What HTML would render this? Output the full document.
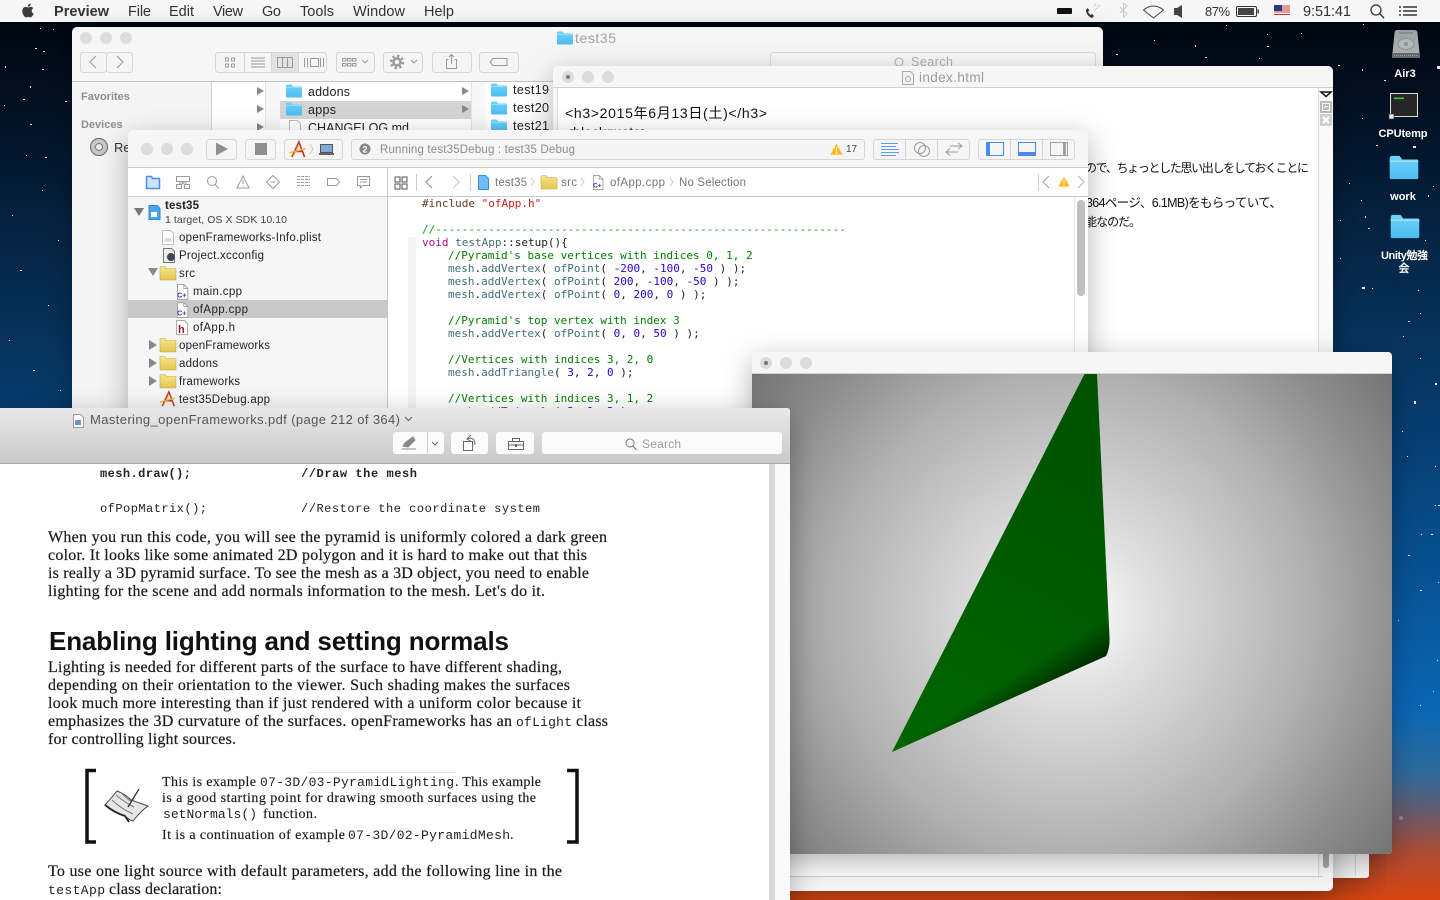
<!DOCTYPE html>
<html><head><meta charset="utf-8"><title>Preview</title>
<style>
html,body{margin:0;padding:0;background:#000;width:1440px;height:900px;overflow:hidden}
svg{display:block}
text{font-family:"Liberation Sans","Noto Sans CJK JP",sans-serif;white-space:pre}
.m{font-size:14.5px;fill:#333}
.code{font-family:"DejaVu Sans Mono",monospace;font-size:11px}
.c{fill:#007f00}.t{fill:#3f6e74}.n{fill:#2a00d0}.k{fill:#222}
.tb{font-size:11.5px;fill:#222}
.s{font-family:"Liberation Serif",serif;font-size:16px;fill:#1a1a1a;stroke:#1a1a1a;stroke-width:.2}
.n2{font-family:"Liberation Serif",serif;font-size:14px;fill:#1a1a1a;stroke:#1a1a1a;stroke-width:.15}
.pm{font-family:"Liberation Mono",monospace;font-size:12px;fill:#222}
.dl{font-size:11px;font-weight:bold;fill:#fff;text-anchor:middle}
.b{fill:#f5f5f5;stroke:#d6d6d6;stroke-width:1}
.ic{fill:none;stroke:#9a9a9a;stroke-width:1}
</style></head><body>
<svg xmlns="http://www.w3.org/2000/svg" width="1440" height="900" viewBox="0 0 1440 900">
<defs>
<linearGradient id="wall" x1="0" y1="0" x2="0" y2="1">
<stop offset="0" stop-color="#00040c"/><stop offset=".12" stop-color="#021022"/><stop offset=".3" stop-color="#06294c"/><stop offset=".55" stop-color="#064680"/><stop offset=".79" stop-color="#0a66b4"/><stop offset=".86" stop-color="#2f6a9a"/><stop offset=".905" stop-color="#6b5a6a"/><stop offset=".95" stop-color="#b04a30"/><stop offset="1" stop-color="#d84410"/>
</linearGradient>
<radialGradient id="bg3d" gradientUnits="userSpaceOnUse" cx="1072" cy="614" r="400">
<stop offset="0" stop-color="#fff"/><stop offset=".2" stop-color="#e0e0e0"/><stop offset=".6" stop-color="#b0b0b0"/><stop offset=".8" stop-color="#909090"/><stop offset="1" stop-color="#747474"/>
</radialGradient>
<linearGradient id="green" gradientUnits="userSpaceOnUse" x1="892" y1="752" x2="1097" y2="374">
<stop offset="0" stop-color="#006600"/><stop offset=".5" stop-color="#005b00"/><stop offset="1" stop-color="#005200"/>
</linearGradient>
<linearGradient id="greenDark" gradientUnits="userSpaceOnUse" x1="1078" y1="636" x2="1098" y2="668">
<stop offset="0" stop-color="#002000" stop-opacity="0"/><stop offset="1" stop-color="#001c00" stop-opacity=".95"/>
</linearGradient>
<linearGradient id="pdfbar" x1="0" y1="0" x2="0" y2="1"><stop offset="0" stop-color="#e9e9e9"/><stop offset="1" stop-color="#c9c9c9"/></linearGradient>
<linearGradient id="blue" x1="0" y1="0" x2="0" y2="1"><stop offset="0" stop-color="#6fd2fb"/><stop offset="1" stop-color="#4cbdf2"/></linearGradient>
<linearGradient id="yel" x1="0" y1="0" x2="0" y2="1"><stop offset="0" stop-color="#f7e58c"/><stop offset="1" stop-color="#e3c64f"/></linearGradient>
<linearGradient id="hd" x1="0" y1="0" x2="0" y2="1"><stop offset="0" stop-color="#9aa2a3"/><stop offset="1" stop-color="#aeb4b4"/></linearGradient>
<filter id="sh" x="-10%" y="-10%" width="120%" height="125%"><feDropShadow dx="0" dy="8" stdDeviation="14" flood-color="#000" flood-opacity=".3"/></filter>
<symbol id="fb" viewBox="0 0 16 14" overflow="visible"><path d="M0 2q0-1.500 1.500-1.500h4l1.500 2h8q1 0 1 1v9q0 1-1 1h-14q-1 0-1-1z" fill="url(#blue)"/><path d="M0 3.500h16" stroke="#9de2fd" stroke-width=".8"/></symbol>
<symbol id="fy" viewBox="0 0 16 14" overflow="visible"><path d="M0 1.500q0-1 1-1h4l1.500 2h8.500q1 0 1 1v9.500q0 1-1 1h-14q-1 0-1-1z" fill="url(#yel)" stroke="#c4a83c" stroke-width=".6"/></symbol>
<symbol id="cpp" viewBox="0 0 14 18" overflow="visible"><path d="M1.500.5h7l4.500 4.500v12.500h-11.500z" fill="#fff" stroke="#9a9a9a"/><path d="M8.500.5v4.500h4.500" fill="none" stroke="#9a9a9a"/><text x="1" y="15" font-size="8" font-weight="bold" style="fill:#52249a">C+</text></symbol>
<symbol id="warn" viewBox="0 0 14 12" overflow="visible"><path d="M7 .5l6.500 11.500h-13z" fill="#fdb813"/><path d="M7 4v4.500M7 9.500v1.300" stroke="#fff" stroke-width="1.400"/></symbol>
<symbol id="appic" viewBox="0 0 18 18" overflow="visible"><path d="M2.500 17L10 1l6 16M5.500 11h9" fill="none" stroke="#c8342a" stroke-width="1.700"/><path d="M0 12.500L17 8" stroke="#e6b73a" stroke-width="1.500"/><path d="M4 16L9.500 5" stroke="#e6b73a" stroke-width="1.200"/></symbol>
<clipPath id="finderClip"><rect x="72" y="27" width="1031" height="600" rx="5"/></clipPath>
<clipPath id="teClip"><rect x="553" y="66" width="780" height="825" rx="5"/></clipPath>
<clipPath id="xcClip"><rect x="128" y="130" width="960" height="290" rx="5"/></clipPath>
<clipPath id="glClip"><rect x="752" y="352" width="640" height="502" rx="4"/></clipPath>
</defs>

<rect width="1440" height="900" fill="url(#wall)"/>
<!-- stars -->
<g fill="#dfeaf5">
<rect x="40" y="28" width="1" height="1"/><rect x="53" y="29" width="1" height="1"/><rect x="35" y="48" width="2" height="1"/><rect x="43" y="51" width="2" height="1"/><rect x="5" y="66" width="1" height="2"/><rect x="42" y="69" width="2" height="1"/><rect x="30" y="86" width="1" height="2"/><rect x="23" y="99" width="2" height="1"/><rect x="4" y="105" width="1" height="1"/><rect x="65" y="101" width="2" height="1"/><rect x="30" y="124" width="2" height="1"/><rect x="26" y="155" width="1" height="1"/><rect x="45" y="157" width="2" height="1"/><rect x="42" y="190" width="1" height="1"/><rect x="12" y="215" width="1" height="1"/><rect x="58" y="240" width="1" height="1"/><rect x="20" y="270" width="2" height="1"/><rect x="48" y="305" width="1" height="1"/><rect x="9" y="340" width="1" height="1"/><rect x="33" y="370" width="2" height="1"/><rect x="60" y="390" width="1" height="1"/>
<rect x="1116" y="54" width="2" height="1"/><rect x="1154" y="40" width="1" height="1"/><rect x="1195" y="45" width="1" height="2"/><rect x="1226" y="25" width="1" height="1"/><rect x="1267" y="34" width="1" height="1"/><rect x="1301" y="33" width="1" height="1"/><rect x="1267" y="46" width="2" height="1"/><rect x="1205" y="57" width="2" height="1"/><rect x="1259" y="58" width="1" height="1"/><rect x="1363" y="24" width="1" height="1"/><rect x="1338" y="65" width="2" height="1"/>
<rect x="1362" y="69" width="1" height="2"/><rect x="1437" y="66" width="3" height="3"/><rect x="1384" y="80" width="2" height="1"/><rect x="1362" y="118" width="1" height="1"/><rect x="1376" y="145" width="2" height="1"/><rect x="1413" y="146" width="3" height="2"/><rect x="1349" y="183" width="1" height="1"/><rect x="1433" y="186" width="1" height="1"/><rect x="1428" y="195" width="1" height="2"/><rect x="1361" y="200" width="1" height="1"/><rect x="1365" y="216" width="1" height="2"/><rect x="1340" y="220" width="1" height="1"/><rect x="1368" y="228" width="2" height="1"/><rect x="1425" y="240" width="1" height="1"/><rect x="1340" y="258" width="1" height="1"/><rect x="1362" y="287" width="3" height="2"/><rect x="1372" y="288" width="1" height="1"/>
<rect x="1418" y="290" width="1" height="1"/><rect x="1420" y="313" width="1" height="1"/><rect x="1408" y="321" width="2" height="1"/><rect x="1403" y="336" width="1" height="1"/><rect x="1420" y="358" width="1" height="1"/><rect x="1435" y="383" width="2" height="2"/><rect x="1414" y="401" width="2" height="3"/><rect x="1402" y="431" width="1" height="1"/><rect x="1407" y="456" width="1" height="1"/><rect x="1435" y="466" width="1" height="1"/><rect x="1435" y="505" width="1" height="1"/><rect x="1431" y="534" width="2" height="1"/><rect x="1421" y="534" width="1" height="1"/><rect x="1408" y="555" width="2" height="1"/><rect x="1438" y="505" width="2" height="1"/><rect x="1420" y="590" width="2" height="1"/><rect x="1438" y="582" width="1" height="1"/><rect x="1398" y="620" width="1" height="1"/><rect x="1437" y="660" width="1" height="1"/><rect x="1433" y="691" width="1" height="1"/><rect x="1420" y="705" width="1" height="1"/>
</g>
<circle cx="1401" cy="818" r="2" fill="#8f8494"/>

<!-- menu bar -->
<rect width="1440" height="22" fill="#f7f7f7"/>
<path transform="translate(21 3.500) scale(.58)" fill="#3c3c3c" d="M12.152 6.896c-.948 0-2.415-1.078-3.960-1.040-2.040.027-3.910 1.183-4.961 3.014-2.117 3.675-.546 9.103 1.519 12.090 1.013 1.454 2.208 3.090 3.792 3.039 1.520-.065 2.090-.987 3.935-.987 1.831 0 2.350.987 3.960.948 1.637-.026 2.676-1.480 3.676-2.948 1.156-1.688 1.636-3.325 1.662-3.415-.039-.013-3.182-1.221-3.220-4.857-.026-3.040 2.480-4.494 2.597-4.559-1.429-2.090-3.623-2.324-4.390-2.376-2-.156-3.675 1.090-4.610 1.090zM15.530 3.830c.843-1.012 1.400-2.427 1.245-3.830-1.207.052-2.662.805-3.532 1.818-.780.896-1.454 2.338-1.273 3.714 1.338.104 2.715-.688 3.559-1.701"/>
<text class="m" x="54" y="16" font-weight="bold" textLength="55">Preview</text>
<text class="m" x="128" y="16" textLength="23">File</text>
<text class="m" x="169" y="16" textLength="25">Edit</text>
<text class="m" x="213" y="16" textLength="30">View</text>
<text class="m" x="262" y="16" textLength="19">Go</text>
<text class="m" x="300" y="16" textLength="34">Tools</text>
<text class="m" x="353" y="16" textLength="52">Window</text>
<text class="m" x="424" y="16" textLength="30">Help</text>
<rect x="1057" y="8" width="15" height="6" rx="1" fill="#111"/>
<path d="M1086 10c0 4 3 7 6 8l2-2-2-2-1.500 1c-1-.8-2-2-2.500-3.500l1.500-1-2-2.500z" fill="#333"/><path d="M1095 10l2-2M1098 7l2-2M1094 6l2-2" stroke="#aaa" stroke-width="1" stroke-dasharray="1 1"/>
<path d="M1120 7l7 7-3.500 3v-14l3.500 3-7 7" fill="none" stroke="#c8c8c8" stroke-width="1"/>
<path d="M1143.500 10q10-8 20 0l-10 8z" fill="none" stroke="#444" stroke-width="1"/>
<path d="M1174 8h3l5-3v13l-5-3h-3z" fill="#444"/>
<text class="m" x="1205" y="16" textLength="25" style="font-size:13px">87%</text>
<rect x="1236.500" y="6.500" width="20" height="10" rx="1.500" fill="none" stroke="#333"/><rect x="1238" y="8" width="16" height="7" fill="#444"/><rect x="1257.500" y="9.500" width="1.500" height="4" fill="#444"/>
<g><rect x="1274" y="5" width="16" height="11" fill="#fff"/><path d="M1274 6h16M1274 8h16M1274 10h16M1274 12h16M1274 14.500h16" stroke="#c33" stroke-width="1"/><rect x="1274" y="5" width="8" height="6" fill="#2a3a80"/></g>
<text class="m" x="1303" y="16" textLength="48">9:51:41</text>
<circle cx="1376" cy="10" r="5" fill="none" stroke="#333" stroke-width="1.300"/><path d="M1380 14l4 4" stroke="#333" stroke-width="1.500"/>
<path d="M1399 7h2M1403 7h14M1399 11h2M1403 11h14M1399 15h2M1403 15h14" stroke="#333" stroke-width="1.500"/>

<!-- desktop icons -->
<path d="M1394.500 33q0-3 3-3h17q3 0 3 3l2.500 25h-28z" fill="url(#hd)"/><path d="M1399 33h14" stroke="#6f7677" stroke-width="1"/><rect x="1392" y="53" width="28" height="5" fill="#646a6b"/><path d="M1394 55.500h24" stroke="#9aa0a1" stroke-dasharray="1 1"/><ellipse cx="1406" cy="44" rx="8" ry="5.500" fill="#b4babb" stroke="#8b9192"/><circle cx="1406" cy="44" r="2" fill="#8b9192"/>
<text class="dl" x="1405" y="77">Air3</text>
<rect x="1390.500" y="93.500" width="27" height="23" fill="#262626" stroke="#ddd"/><rect x="1394" y="97.500" width="10" height="1.600" fill="#2ecc40"/><rect x="1389" y="114" width="5" height="5" fill="#eee" stroke="#333" stroke-width=".7"/>
<text class="dl" x="1403" y="137" textLength="49">CPUtemp</text>
<use href="#fb" x="1389" y="155" width="30" height="25"/>
<text class="dl" x="1403" y="200">work</text>
<use href="#fb" x="1390" y="214" width="30" height="25"/>
<text class="dl" x="1404.500" y="259" textLength="47">Unity勉強</text>
<text class="dl" x="1404" y="272">会</text>

<!-- back sliver window -->
<g filter="url(#sh)"><rect x="1200" y="600" width="169" height="278" rx="3" fill="#f6f6f6"/></g>
<rect x="1355" y="854" width="1" height="22" fill="#d8d8d8"/>

<!-- Finder -->
<g filter="url(#sh)"><rect x="72" y="27" width="1031" height="600" rx="5" fill="#f6f6f6"/></g>
<g clip-path="url(#finderClip)">
<circle cx="86" cy="38" r="6" fill="#dcdcdc"/><circle cx="106" cy="38" r="6" fill="#dcdcdc"/><circle cx="126" cy="38" r="6" fill="#dcdcdc"/>
<use href="#fb" x="557" y="31" width="16" height="14"/>
<text x="575" y="43" style="font-size:14px;fill:#a2a2a2" textLength="41">test35</text>
<rect class="b" x="80.500" y="52.500" width="26" height="20" rx="3"/><rect class="b" x="106.500" y="52.500" width="26" height="20" rx="3"/>
<path class="ic" d="M96 56l-6 6 6 6M117 56l6 6-6 6" stroke-width="1.200"/>
<rect class="b" x="215.500" y="52.500" width="111" height="20" rx="3"/><rect x="272" y="53" width="27" height="19" fill="#e2e2e2"/>
<path d="M244.500 53v19M271.500 53v19M298.500 53v19" stroke="#d6d6d6"/>
<path class="ic" d="M225.500 58h3v3h-3zM231.500 58h3v3h-3zM225.500 64h3v3h-3zM231.500 64h3v3h-3zM251 58h14M251 61h14M251 64h14M251 67h14M277.500 57.500h15v10h-15zM282.500 57.500v10M287.500 57.500v10M304.500 58v9M307.500 58v9M310.500 58.500h8v8h-8zM320.500 58v9M323.500 58v9"/>
<rect class="b" x="336.500" y="52.500" width="38" height="20" rx="3"/><path class="ic" d="M342.500 58.500h3.500v2.500h-3.500zM347.500 58.500h3.500v2.500h-3.500zM352.500 58.500h3.500v2.500h-3.500zM342.500 63.500h3.500v2.500h-3.500zM347.500 63.500h3.500v2.500h-3.500zM352.500 63.500h3.500v2.500h-3.500zM362 60l3 3 3-3"/>
<rect class="b" x="383.500" y="52.500" width="39" height="20" rx="3"/><circle cx="397" cy="62" r="6" fill="none" stroke="#9a9a9a" stroke-width="2.500" stroke-dasharray="2.300 2.400"/><circle cx="397" cy="62" r="3.500" fill="none" stroke="#9a9a9a" stroke-width="2.500"/><path class="ic" d="M411 60l3 3 3-3"/>
<rect class="b" x="432.500" y="52.500" width="39" height="20" rx="3"/><path class="ic" d="M448.500 59.500h-2v9h10v-9h-2M451.500 64v-9M449 57l2.500-2.500 2.500 2.500"/>
<rect class="b" x="479.500" y="52.500" width="39" height="20" rx="3"/><path class="ic" d="M493 58.500h14v7h-14l-3-3.500z"/>
<rect x="770.500" y="52.500" width="325" height="20" rx="3" fill="#f8f8f8" stroke="#dcdcdc"/>
<circle cx="899" cy="62" r="4" fill="none" stroke="#b0b0b0"/>
<text x="911" y="66" style="font-size:12.500px;fill:#b0b0b0" textLength="42">Search</text>
<rect x="72" y="81" width="1031" height="1" fill="#c4c4c4"/>
<rect x="72" y="82" width="139" height="400" fill="#f5f5f5"/><rect x="211" y="82" width="1" height="400" fill="#d2d2d2"/>
<text x="81" y="100" style="font-size:11px;font-weight:bold;fill:#8e8e8e">Favorites</text>
<text x="81" y="128" style="font-size:11px;font-weight:bold;fill:#8e8e8e">Devices</text>
<circle cx="99" cy="147" r="8.500" fill="#c8c8c8" stroke="#666"/><circle cx="99" cy="147" r="3.500" fill="#eee" stroke="#777"/>
<text x="114" y="152" style="font-size:13px;fill:#333">Re</text>
<rect x="212" y="82" width="800" height="100" fill="#fff"/>
<path d="M257 87l7 4-7 4zM257 105l7 4-7 4zM257 123l7 4-7 4z" fill="#888"/>
<rect x="266" y="82" width="14" height="80" fill="#f7f7f7"/><rect x="265" y="82" width="1" height="80" fill="#e4e4e4"/>
<rect x="280" y="101" width="191" height="18" fill="#d4d4d4"/>
<use href="#fb" x="286" y="84" width="16" height="14"/><use href="#fb" x="286" y="102" width="16" height="14"/>
<path d="M289.500 120.500h8l3 3v12h-11z" fill="#fff" stroke="#bbb"/>
<text x="308" y="96" class="tb" style="font-size:12.500px" textLength="42">addons</text>
<text x="308" y="114" class="tb" style="font-size:12.500px" textLength="28">apps</text>
<text x="308" y="132" class="tb" style="font-size:12.500px" textLength="101">CHANGELOG.md</text>
<path d="M462 87l7 4-7 4zM462 105l7 4-7 4z" fill="#888"/>
<rect x="471" y="82" width="14" height="80" fill="#f7f7f7"/><rect x="471" y="82" width="1" height="80" fill="#e4e4e4"/>
<use href="#fb" x="491" y="83" width="16" height="14"/><use href="#fb" x="491" y="101" width="16" height="14"/><use href="#fb" x="491" y="119" width="16" height="14"/>
<text x="513" y="94" class="tb" style="font-size:12.500px" textLength="36">test19</text>
<text x="513" y="112" class="tb" style="font-size:12.500px" textLength="36">test20</text>
<text x="513" y="130" class="tb" style="font-size:12.500px" textLength="36">test21</text>
</g>

<!-- Text editor window -->
<g filter="url(#sh)"><rect x="553" y="66" width="780" height="825" rx="5" fill="#f6f6f6"/></g>
<g clip-path="url(#teClip)">
<rect x="558" y="88" width="760" height="788" fill="#fff"/>
<rect x="553" y="87" width="780" height="1" fill="#cfcfcf"/>
<rect x="557" y="88" width="1" height="788" fill="#dcdcdc"/>
<circle cx="568" cy="77" r="6" fill="#dcdcdc"/><circle cx="568" cy="77" r="2" fill="#777"/><circle cx="588" cy="77" r="6" fill="#dcdcdc"/><circle cx="608" cy="77" r="6" fill="#dcdcdc"/>
<path d="M902.500 71.500h8l3 3v10h-11z" fill="#f2f2f2" stroke="#aaa"/><circle cx="908" cy="79" r="2.500" fill="none" stroke="#aaa"/>
<text x="919" y="82" style="font-size:13.500px;fill:#9a9a9a" textLength="65">index.html</text>
<text x="565" y="118" style="font-size:14px;fill:#111" textLength="202">&lt;h3&gt;2015年6月13日(土)&lt;/h3&gt;</text>
<text x="565" y="137" style="font-size:14px;fill:#111">&lt;blockquote&gt;</text>
<text x="1085" y="172" style="font-size:12px;fill:#111" textLength="224">ので、ちょっとした思い出しをしておくことに</text>
<text x="1086" y="207" style="font-size:12.500px;fill:#111" textLength="196">364ページ、6.1MB)をもらっていて、</text>
<text x="1085" y="226" style="font-size:12px;fill:#111" textLength="56">能なのだ。</text>
<rect x="1318" y="88" width="15" height="790" fill="#fafafa"/><rect x="1318" y="88" width="1" height="790" fill="#dedede"/>
<path d="M1321 92h10l-5 4.500z" fill="#fff" stroke="#111" stroke-width="1.500"/>
<rect x="1320" y="101" width="12" height="12" fill="#b8b8b8"/><rect x="1322.500" y="103.500" width="7" height="7" fill="none" stroke="#fff"/><path d="M1324 108l2-2 2 1" fill="none" stroke="#fff"/>
<rect x="1320" y="114" width="12" height="12" fill="#cfcfcf"/><path d="M1323 117l6 6M1329 117l-6 6" stroke="#fff" stroke-width="2"/>
<rect x="1323" y="820" width="6" height="48" rx="3" fill="#aaa"/>
<rect x="553" y="876" width="770" height="1" fill="#d2d2d2"/>
</g>
<rect x="1323" y="848" width="6" height="20" rx="3" fill="#a8a8a8"/>

<!-- Xcode -->
<g filter="url(#sh)"><rect x="128" y="130" width="960" height="290" rx="5" fill="#f6f6f6"/></g>
<g clip-path="url(#xcClip)">
<circle cx="147" cy="149" r="6" fill="#dcdcdc"/><circle cx="167" cy="149" r="6" fill="#dcdcdc"/><circle cx="187" cy="149" r="6" fill="#dcdcdc"/>
<rect class="b" x="206.500" y="139.500" width="30" height="20" rx="3"/><path d="M216 142.500l12 6.500-12 6.500z" fill="#8f8f8f"/>
<rect class="b" x="245.500" y="139.500" width="30" height="20" rx="3"/><rect x="255" y="143" width="12" height="12" fill="#8f8f8f"/>
<rect class="b" x="284.500" y="139.500" width="58" height="20" rx="3"/>
<use href="#appic" x="289" y="141" width="18" height="17"/>
<path d="M310 144l3 5-3 5" fill="none" stroke="#ccc"/>
<rect x="320.500" y="144.500" width="12" height="8" fill="#7fa9d6" stroke="#555"/><rect x="319" y="153" width="15" height="2" fill="#666"/>
<rect class="b" x="351.500" y="139.500" width="513" height="20" rx="3"/>
<circle cx="365" cy="149" r="5.500" fill="#888"/><text x="365" y="152.500" text-anchor="middle" style="font-size:9px;font-weight:bold;fill:#fff">2</text>
<text x="380" y="153" style="font-size:11.500px;fill:#8c8c8c" textLength="195">Running test35Debug : test35 Debug</text>
<use href="#warn" x="830" y="143" width="13" height="12"/>
<text x="846" y="152" style="font-size:10px;fill:#444" textLength="11">17</text>
<rect class="b" x="873.500" y="139.500" width="96" height="20" rx="3"/><path d="M905.500 140v19M937.500 140v19" stroke="#d6d6d6"/>
<path d="M881 143.500h17M881 146.500h15M881 149.500h18M881 152.500h18M881 155.500h15" stroke="#5a9cf0" stroke-width="1"/>
<circle cx="920" cy="148" r="5.500" class="ic"/><circle cx="924" cy="151" r="5.500" class="ic"/>
<path class="ic" d="M946 152h12M950 148.500l-4 3.500 4 3.500M950 146h12M958 143l4 3-4 3"/>
<rect class="b" x="978.500" y="139.500" width="96" height="20" rx="3"/><path d="M1010.500 140v19M1042.500 140v19" stroke="#d6d6d6"/>
<rect x="986.500" y="142.500" width="17" height="13" fill="none" stroke="#4a8cea"/><rect x="987" y="143" width="3" height="12" fill="#4a8cea"/>
<rect x="1018.500" y="142.500" width="17" height="13" fill="none" stroke="#4a8cea"/><rect x="1019" y="152" width="16" height="3" fill="#4a8cea"/>
<rect x="1050.500" y="142.500" width="17" height="13" fill="none" stroke="#a0a0a0"/><rect x="1063" y="143" width="3" height="12" fill="#a0a0a0"/>
<rect x="128" y="167" width="960" height="1" fill="#c8c8c8"/>
<rect x="128" y="168" width="960" height="270" fill="#fff"/>
<!-- navigators -->
<path d="M146.500 176.500h5l1 2h7v10h-13z" fill="#cfe1fb" stroke="#4a8cea" stroke-width="1.500"/>
<path class="ic" d="M176.500 176.500h13v5h-13zM176.500 184.500h5v4h-5zM184.500 184.500h5v4h-5zM183 181.500v3M179 183h8"/>
<circle class="ic" cx="212" cy="181" r="4.500"/><path class="ic" d="M215 184.500l4 4"/>
<path class="ic" d="M243 176l6 12h-12zM243 180v4M243 185.500v1"/>
<path class="ic" d="M273 175.500l6.500 6.500-6.500 6.500-6.500-6.500zM270.500 182h5"/>
<path class="ic" d="M297 176.500h13M297 179.500h13M297 182.500h13M297 185.500h13" stroke-dasharray="3 1"/>
<path class="ic" d="M327.500 178.500h9l3 3.500-3 3.500h-9z"/>
<path class="ic" d="M357.500 176.500h12v9h-7l-2 2.500v-2.500h-3zM360 179.500h7M360 182h7"/>
<rect x="387" y="168" width="1" height="250" fill="#c8c8c8"/>
<rect x="388" y="196" width="700" height="1" fill="#c8c8c8"/><rect x="128" y="196" width="259" height="1" fill="#c8c8c8"/>
<!-- jump bar -->
<path d="M395 177h5v5h-5zM402 177h5v5h-5zM395 184h5v5h-5zM402 184h5v5h-5z" fill="none" stroke="#555"/>
<rect x="416" y="174" width="1" height="17" fill="#ccc"/>
<path d="M432 176l-6 6 6 6" fill="none" stroke="#999" stroke-width="1.200"/><path d="M453 176l6 6-6 6" fill="none" stroke="#ccc" stroke-width="1.200"/>
<rect x="470" y="174" width="1" height="17" fill="#ccc"/>
<path d="M478.500 175.500h7l3 3v11h-10z" fill="#6fbdf5" stroke="#3a8edc"/>
<text x="495" y="186" style="font-size:11.500px;fill:#777" textLength="32">test35</text>
<path d="M531 178l3 4-3 4" fill="none" stroke="#ccc"/>
<use href="#fy" x="541" y="175" width="16" height="14"/>
<text x="561" y="186" style="font-size:11.500px;fill:#777" textLength="16">src</text>
<path d="M581 178l3 4-3 4" fill="none" stroke="#ccc"/>
<use href="#cpp" x="592" y="175" width="12" height="15"/>
<text x="610" y="186" style="font-size:11.500px;fill:#777" textLength="55">ofApp.cpp</text>
<path d="M670 178l3 4-3 4" fill="none" stroke="#ccc"/>
<text x="679" y="186" style="font-size:11.500px;fill:#777" textLength="67">No Selection</text>
<rect x="1038" y="174" width="1" height="17" fill="#ccc"/>
<path d="M1049 176l-6 6 6 6" fill="none" stroke="#aaa" stroke-width="1.200"/>
<use href="#warn" x="1058" y="176" width="12" height="11"/>
<path d="M1078 176l6 6-6 6" fill="none" stroke="#bbb" stroke-width="1.200"/>
<!-- tree -->
<rect x="128" y="197" width="259" height="230" fill="#f6f6f6"/>
<rect x="128" y="300" width="259" height="18" fill="#c9c9c9"/>
<path d="M134 208h10l-5 8z" fill="#777"/>
<path d="M149 205.500h8l3 3v11h-11z" fill="#49a6ee" stroke="#2a86d6"/><rect x="151" y="212" width="6" height="5" fill="#fff"/>
<text x="165" y="209" style="font-size:11.500px;font-weight:bold;fill:#222" textLength="34">test35</text>
<text x="165" y="223" style="font-size:10.500px;fill:#444" textLength="122">1 target, OS X SDK 10.10</text>
<path d="M162.500 230.500h8l3 3v11h-11z" fill="#fff" stroke="#bbb"/><rect x="165" y="238" width="6" height="4" fill="#ddd"/>
<text x="179" y="241" class="tb" textLength="142">openFrameworks-Info.plist</text>
<path d="M163.500 248.500h8l3 3v11h-11z" fill="#eee" stroke="#777"/><circle cx="171" cy="257" r="4" fill="#445" />
<text x="179" y="259" class="tb" textLength="85">Project.xcconfig</text>
<path d="M148 268h10l-5 8z" fill="#888"/>
<use href="#fy" x="160" y="266" width="16" height="14"/>
<text x="179" y="277" class="tb" textLength="16">src</text>
<use href="#cpp" x="176" y="284" width="13" height="16"/>
<text x="193" y="295" class="tb" textLength="49">main.cpp</text>
<use href="#cpp" x="176" y="302" width="13" height="16"/>
<text x="193" y="313" class="tb" textLength="55">ofApp.cpp</text>
<path d="M176.500 320.500h8l3 3v11h-11z" fill="#fff" stroke="#aaa"/><text x="178" y="333" style="font-size:11px;font-weight:bold;fill:#a01c2a">h</text>
<text x="193" y="331" class="tb" textLength="42">ofApp.h</text>
<path d="M149 340l8 5-8 5zM149 358l8 5-8 5zM149 376l8 5-8 5z" fill="#888"/>
<use href="#fy" x="160" y="338" width="16" height="14"/><use href="#fy" x="160" y="356" width="16" height="14"/><use href="#fy" x="160" y="374" width="16" height="14"/>
<text x="179" y="349" class="tb" textLength="91">openFrameworks</text>
<text x="179" y="367" class="tb" textLength="39">addons</text>
<text x="179" y="385" class="tb" textLength="61">frameworks</text>
<use href="#appic" x="160" y="391" width="16" height="16"/>
<text x="179" y="403" class="tb" textLength="91">test35Debug.app</text>
<!-- code -->
<rect x="408" y="237" width="8" height="190" fill="#f4f4f4"/>
<g class="code">
<text class="code" x="422" y="207" style="fill:#643820">#include <tspan style="fill:#d0201a">"ofApp.h"</tspan></text>
<text class="code" x="422" y="233" style="fill:#12a012">//--------------------------------------------------------------</text>
<text class="code" x="422" y="246"><tspan style="fill:#aa0d91">void</tspan><tspan class="t"> testApp</tspan><tspan class="k">::setup(){</tspan></text>
<text class="code c" x="448" y="259">//Pyramid's base vertices with indices 0, 1, 2</text>
<text class="code" x="448" y="272"><tspan class="t">mesh</tspan><tspan class="k">.</tspan><tspan class="t">addVertex</tspan><tspan class="k">( </tspan><tspan class="t">ofPoint</tspan><tspan class="k">( </tspan><tspan class="n">-200</tspan><tspan class="k">, </tspan><tspan class="n">-100</tspan><tspan class="k">, </tspan><tspan class="n">-50</tspan><tspan class="k"> ) );</tspan></text>
<text class="code" x="448" y="285"><tspan class="t">mesh</tspan><tspan class="k">.</tspan><tspan class="t">addVertex</tspan><tspan class="k">( </tspan><tspan class="t">ofPoint</tspan><tspan class="k">( </tspan><tspan class="n">200</tspan><tspan class="k">, </tspan><tspan class="n">-100</tspan><tspan class="k">, </tspan><tspan class="n">-50</tspan><tspan class="k"> ) );</tspan></text>
<text class="code" x="448" y="298"><tspan class="t">mesh</tspan><tspan class="k">.</tspan><tspan class="t">addVertex</tspan><tspan class="k">( </tspan><tspan class="t">ofPoint</tspan><tspan class="k">( </tspan><tspan class="n">0</tspan><tspan class="k">, </tspan><tspan class="n">200</tspan><tspan class="k">, </tspan><tspan class="n">0</tspan><tspan class="k"> ) );</tspan></text>
<text class="code c" x="448" y="324">//Pyramid's top vertex with index 3</text>
<text class="code" x="448" y="337"><tspan class="t">mesh</tspan><tspan class="k">.</tspan><tspan class="t">addVertex</tspan><tspan class="k">( </tspan><tspan class="t">ofPoint</tspan><tspan class="k">( </tspan><tspan class="n">0</tspan><tspan class="k">, </tspan><tspan class="n">0</tspan><tspan class="k">, </tspan><tspan class="n">50</tspan><tspan class="k"> ) );</tspan></text>
<text class="code c" x="448" y="363">//Vertices with indices 3, 2, 0</text>
<text class="code" x="448" y="376"><tspan class="t">mesh</tspan><tspan class="k">.</tspan><tspan class="t">addTriangle</tspan><tspan class="k">( </tspan><tspan class="n">3</tspan><tspan class="k">, </tspan><tspan class="n">2</tspan><tspan class="k">, </tspan><tspan class="n">0</tspan><tspan class="k"> );</tspan></text>
<text class="code c" x="448" y="402">//Vertices with indices 3, 1, 2</text>
<text class="code" x="448" y="415"><tspan class="t">mesh</tspan><tspan class="k">.</tspan><tspan class="t">addTriangle</tspan><tspan class="k">( </tspan><tspan class="n">3</tspan><tspan class="k">, </tspan><tspan class="n">1</tspan><tspan class="k">, </tspan><tspan class="n">2</tspan><tspan class="k"> );</tspan></text>
</g>
<rect x="1074" y="197" width="1" height="230" fill="#eaeaea"/>
<rect x="1077" y="200" width="8" height="96" rx="4" fill="#c0c0c0"/>
</g>

<!-- 3D window -->
<g filter="url(#sh)"><rect x="752" y="352" width="640" height="502" rx="4" fill="#f6f6f6"/></g>
<g clip-path="url(#glClip)">
<rect x="752" y="374" width="640" height="480" fill="url(#bg3d)"/>
<rect x="752" y="373" width="640" height="1" fill="#d5d5d5"/>
<circle cx="766" cy="363" r="6" fill="#dcdcdc"/><circle cx="766" cy="363" r="2" fill="#777"/><circle cx="786" cy="363" r="6" fill="#dcdcdc"/><circle cx="806" cy="363" r="6" fill="#dcdcdc"/>
<path d="M1084.500 374H1097L1109.500 637Q1110 648 1106 656L892 752Z" fill="url(#green)"/>
<path d="M1084.500 374H1097L1109.500 637Q1110 648 1106 656L892 752Z" fill="url(#greenDark)"/>
</g>

<!-- PDF window -->
<g filter="url(#sh)"><rect x="0" y="408" width="790" height="520" rx="3" fill="#fff"/></g>
<path d="M0 408h787q3 0 3 3v52h-790z" fill="url(#pdfbar)"/>
<rect x="0" y="463" width="790" height="1" fill="#a8a8a8"/>
<rect x="769" y="464" width="6" height="436" fill="#d8d8d8"/><rect x="775" y="464" width="15" height="436" fill="#fafafa"/>
<path d="M73.500 414.500h7l3 3v10h-10z" fill="#fff" stroke="#999"/><rect x="75" y="420" width="6" height="5" fill="#6c8fc8"/>
<text x="90" y="424" style="font-size:13px;fill:#555" textLength="310">Mastering_openFrameworks.pdf (page 212 of 364)</text>
<path d="M405 417l3.500 3.500 3.500-3.500" fill="none" stroke="#666" stroke-width="1.200"/>
<rect x="393" y="432" width="51" height="22" rx="3" fill="#fbfbfb"/><rect x="427" y="432" width="1" height="22" fill="#ccc"/>
<path d="M403 446l2-3 8-6 2 3-7 7zM402 449h14" fill="#888" stroke="#888" stroke-width="1"/><path d="M432 442l3 3 3-3" fill="none" stroke="#666"/>
<rect x="451" y="432" width="37" height="22" rx="3" fill="#fbfbfb"/>
<rect x="463.500" y="441.500" width="9" height="9" fill="none" stroke="#666"/><path d="M467 439q8-3 8 6M471 435l-4 4 4 2.500" fill="none" stroke="#666"/>
<rect x="496" y="432" width="38" height="22" rx="3" fill="#fbfbfb"/>
<rect x="508.500" y="441.500" width="15" height="8" fill="none" stroke="#666"/><path d="M512.500 441.500v-3h7v3M508.500 445h15" fill="none" stroke="#666"/><rect x="515" y="444" width="2" height="3" fill="#666"/>
<rect x="542" y="432" width="240" height="22" rx="3" fill="#fbfbfb"/>
<circle cx="630" cy="443" r="4" fill="none" stroke="#777"/><path d="M633 446l3.500 4" stroke="#777"/>
<text x="642" y="448" style="font-size:12px;fill:#9a9a9a" textLength="39">Search</text>

<text class="pm" x="100" y="477" font-weight="bold" textLength="91">mesh.draw();</text>
<text class="pm" x="301" y="477" font-weight="bold" textLength="116">//Draw the mesh</text>
<text class="pm" x="100" y="512" textLength="107">ofPopMatrix();</text>
<text class="pm" x="301" y="512" textLength="239">//Restore the coordinate system</text>
<text class="s" x="48" y="542" textLength="559">When you run this code, you will see the pyramid is uniformly colored a dark green</text>
<text class="s" x="48" y="560" textLength="539">color. It looks like some animated 2D polygon and it is hard to make out that this</text>
<text class="s" x="48" y="578" textLength="541">is really a 3D pyramid surface. To see the mesh as a 3D object, you need to enable</text>
<text class="s" x="48" y="596" textLength="497">lighting for the scene and add normals information to the mesh. Let's do it.</text>
<text x="49" y="650" style="font-size:26px;font-weight:bold;fill:#111" textLength="460">Enabling lighting and setting normals</text>
<text class="s" x="48" y="672" textLength="514">Lighting is needed for different parts of the surface to have different shading,</text>
<text class="s" x="48" y="690" textLength="522">depending on their orientation to the viewer. Such shading makes the surfaces</text>
<text class="s" x="48" y="708" textLength="533">look much more interesting than if just rendered with a uniform color because it</text>
<text class="s" x="48" y="726" textLength="464">emphasizes the 3D curvature of the surfaces. openFrameworks has an</text>
<text class="pm" x="516" y="726" style="font-size:13px" textLength="56">ofLight</text>
<text class="s" x="576" y="726" textLength="32">class</text>
<text class="s" x="48" y="744" textLength="188">for controlling light sources.</text>
<path d="M96 770.500H87V842H96" fill="none" stroke="#111" stroke-width="3.500"/>
<path d="M567 770.500H577V842H567" fill="none" stroke="#111" stroke-width="3.500"/>
<g fill="none" stroke="#444" stroke-width="1">
<path d="M105 805q8-9 12-14 8 3 14 9l17 6q-7 5-15 15-4-1-8-5-10-3-20-11z" fill="#e6e6e6"/><path d="M105 805q10 8 20 11l4 6" stroke="#222" stroke-width="1.800"/><path d="M112 800q8 8 21 14M116 795q8 7 18 12M121 792q4 6 10 9" stroke="#777"/><path d="M128 807l11-18" stroke="#333" stroke-width="1.300"/>
</g>
<rect x="308" y="772" width="147" height="1" fill="#cfe2f5"/>
<text class="n2" x="162" y="786" textLength="94">This is example</text>
<text class="pm" x="260" y="786" style="font-size:13px" textLength="194">07-3D/03-PyramidLighting</text>
<text class="n2" x="455" y="786" textLength="86">. This example</text>
<text class="n2" x="162" y="802" textLength="374">is a good starting point for drawing smooth surfaces using the</text>
<text class="pm" x="163" y="818" style="font-size:13px" textLength="94">setNormals()</text>
<text class="n2" x="263" y="818" textLength="54">function.</text>
<text class="n2" x="162" y="839" textLength="183">It is a continuation of example</text>
<text class="pm" x="348" y="839" style="font-size:13px" textLength="162">07-3D/02-PyramidMesh</text>
<text class="n2" x="510" y="839">.</text>
<text class="s" x="48" y="876" textLength="514">To use one light source with default parameters, add the following line in the</text>
<text class="pm" x="48" y="894" style="font-size:13px" textLength="57">testApp</text>
<text class="s" x="109" y="894" textLength="113">class declaration:</text>
</svg>
</body></html>
